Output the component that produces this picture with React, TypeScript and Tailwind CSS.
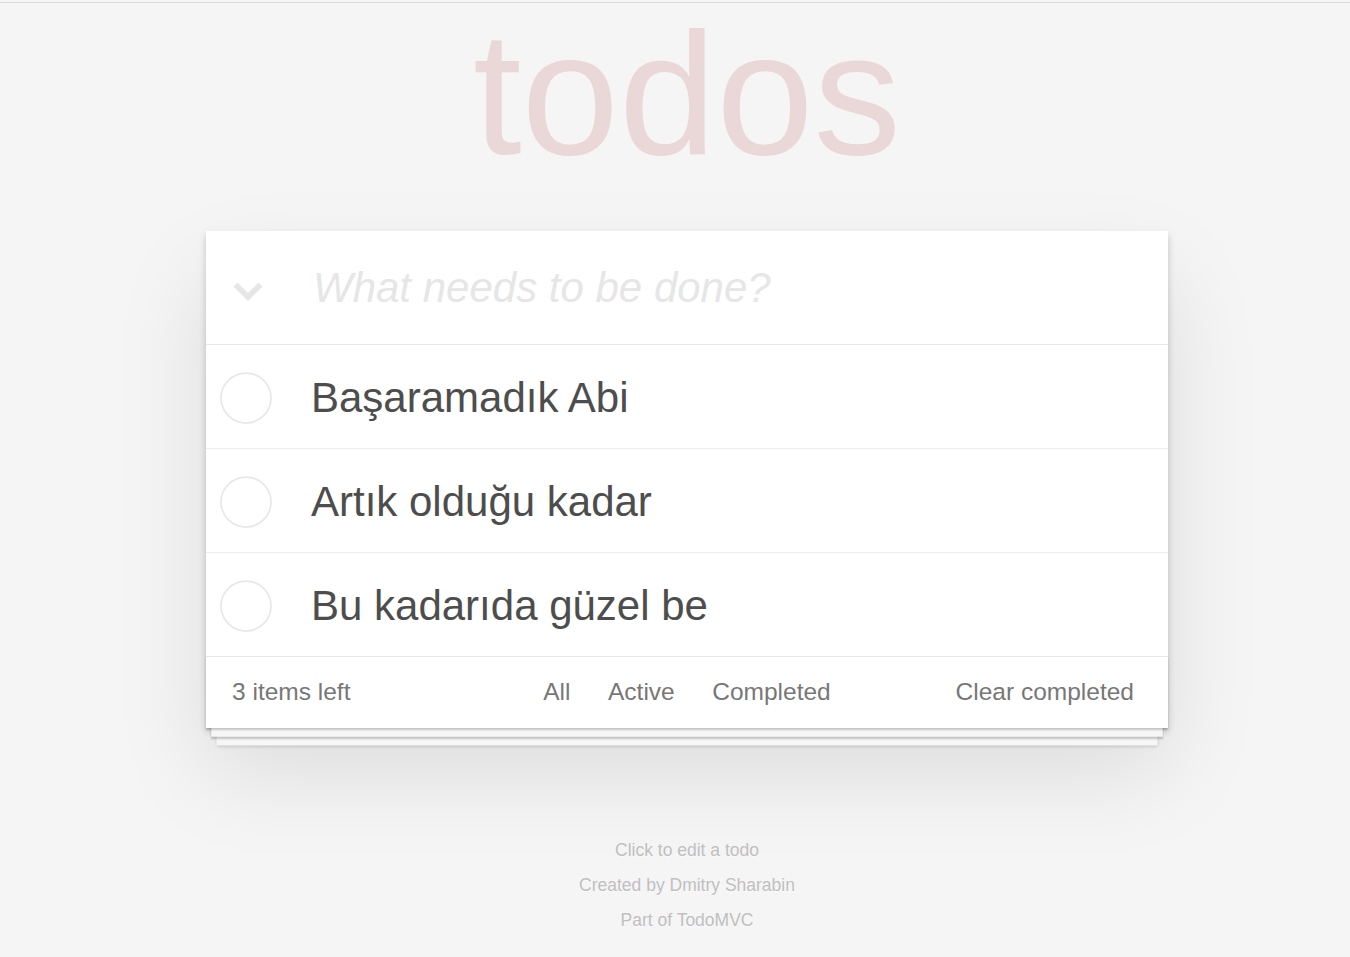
import React from "react";

const todos = ["Başaramadık Abi", "Artık olduğu kadar", "Bu kadarıda güzel be"];

function Circle() {
  return (
    <svg width="52" height="52" viewBox="0 0 52 52" className="mt-[3px] shrink-0">
      <circle cx="26" cy="26" r="25" fill="none" stroke="#e8e8e8" strokeWidth="1.75" />
    </svg>
  );
}

export default function App() {
  return (
    <div className="min-h-[957px] bg-[#f5f5f5] font-['Liberation_Sans',Arial,sans-serif]">
      <div className="h-[3px] border-b border-[#d9d9d9]" />
      <div className="pl-[24px]">
        <div className="w-[962px] mx-auto">
          <h1 className="mt-[3px] text-center text-[175px] leading-[175px] font-normal text-[rgba(175,47,47,0.15)]">
            todos
          </h1>
          <section className="mt-[50px] bg-white shadow-[0_3.5px_7px_0_rgba(0,0,0,0.2),0_44px_88px_0_rgba(0,0,0,0.1)]">
            <header className="flex items-center h-[113px]">
              <div className="w-[107px] shrink-0 pl-[27px] mt-[7px]">
                <svg width="30" height="19" viewBox="0 0 30 19">
                  <polyline
                    points="2.5,2.5 15,15 27.5,2.5"
                    fill="none"
                    stroke="#e6e6e6"
                    strokeWidth="5.5"
                    strokeLinejoin="miter"
                  />
                </svg>
              </div>
              <input
                className="flex-1 min-w-0 bg-transparent outline-none border-none text-[42px] leading-[58.8px] text-[#4d4d4d] placeholder:italic placeholder:text-[#e6e6e6] mt-[2px] pr-[28px]"
                placeholder="What needs to be done?"
              />
            </header>
            <ul className="border-t border-[#e6e6e6]">
              {todos.map((t, i) => (
                <li
                  key={t}
                  className={
                    "flex items-center h-[103px] pl-[14px] " +
                    (i < todos.length - 1 ? "box-content border-b border-[#ededed]" : "")
                  }
                >
                  <Circle />
                  <span className="ml-[39px] mt-[4px] text-[42px] leading-[50.4px] text-[#4d4d4d]">{t}</span>
                </li>
              ))}
            </ul>
            <footer className="grid grid-cols-[1fr_auto_1fr] items-center h-[72px] border-t border-[#e6e6e6] px-[26px] text-[24.5px] leading-[34.3px] text-[#777777] shadow-[0_1.75px_1.75px_rgba(0,0,0,0.2),0_14px_0_-5.25px_#f6f6f6,0_15.75px_1.75px_-5.25px_rgba(0,0,0,0.2),0_28px_0_-10.5px_#f6f6f6,0_29.75px_3.5px_-10.5px_rgba(0,0,0,0.2)]">
              <span className="justify-self-start">3 items left</span>
              <div className="flex gap-[37.5px]">
                <span>All</span>
                <span>Active</span>
                <span>Completed</span>
              </div>
              <span className="justify-self-end pr-[8px]">Clear completed</span>
            </footer>
          </section>
          <div className="mt-[114px] flex flex-col items-center gap-[17.5px] text-[17.5px] leading-[17.5px] text-[#bfbfbf] [text-shadow:0_1px_0_rgba(255,255,255,0.5)]">
            <p>Click to edit a todo</p>
            <p>Created by Dmitry Sharabin</p>
            <p>Part of TodoMVC</p>
          </div>
        </div>
      </div>
    </div>
  );
}
